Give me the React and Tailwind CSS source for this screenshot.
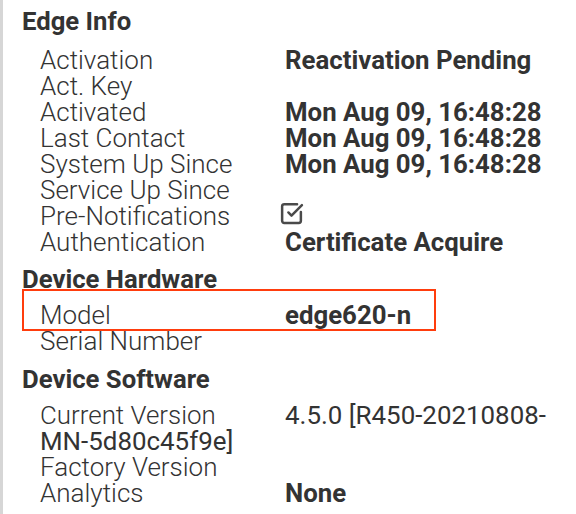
import { SquareCheckBig } from "lucide-react";

const edgeInfo = [
  ["Activation", "Reactivation Pending"],
  ["Act. Key", ""],
  ["Activated", "Mon Aug 09, 16:48:28"],
  ["Last Contact", "Mon Aug 09, 16:48:28"],
  ["System Up Since", "Mon Aug 09, 16:48:28"],
  ["Service Up Since", ""],
  ["Pre-Notifications", "check"],
  ["Authentication", "Certificate Acquire"],
];

function Row({ label, value, children }) {
  return (
    <div className="relative flex h-[26px] items-center pl-[18px]">
      <span className="w-[245px] shrink-0 font-light text-[26px] leading-[26px] whitespace-nowrap">{label}</span>
      {value === "check" ? (
        <SquareCheckBig size={25} strokeWidth={2.4} className="text-[#4a4a4a] -ml-[6px] -mt-[5px]" />
      ) : (
        <span className="font-bold text-[25.8px] leading-[26px] whitespace-nowrap">{value}</span>
      )}
      {children}
    </div>
  );
}

export default function App() {
  return (
    <div
      className="h-[514px] border-l-[3px] border-[#d6d6d6] bg-white pl-[19px] text-[#333] overflow-hidden"
      style={{ fontFamily: "Roboto, 'Noto Sans', sans-serif" }}
    >
      <div className="w-[534px]">
        <h3 className="mt-[8px] mb-[13px] font-bold text-[25.7px] leading-[26px]">Edge Info</h3>
        {edgeInfo.map(([l, v]) => (
          <Row key={l} label={l} value={v} />
        ))}

        <h3 className="mt-[11px] mb-[10px] font-bold text-[25.7px] leading-[26px]">Device Hardware</h3>
        <Row label="Model" value="edge620-n">
          {/* highlight box */}
          <div className="absolute left-0 top-[-13px] h-[42px] w-[414px] border-2 border-[#ff3d0d]" />
        </Row>
        <Row label="Serial Number" value="" />

        <h3 className="mt-[12px] mb-[10px] font-bold text-[25.7px] leading-[26px]">Device Software</h3>
        <div className="pl-[18px] text-[25.9px] leading-[26px]">
          <span className="inline-block w-[245px] font-light">Current Version</span>
          <span className="font-normal">4.5.0 [R450-20210808-MN-5d80c45f9e]</span>
        </div>
        <Row label="Factory Version" value="" />
        <Row label="Analytics" value="None" />
      </div>
    </div>
  );
}
